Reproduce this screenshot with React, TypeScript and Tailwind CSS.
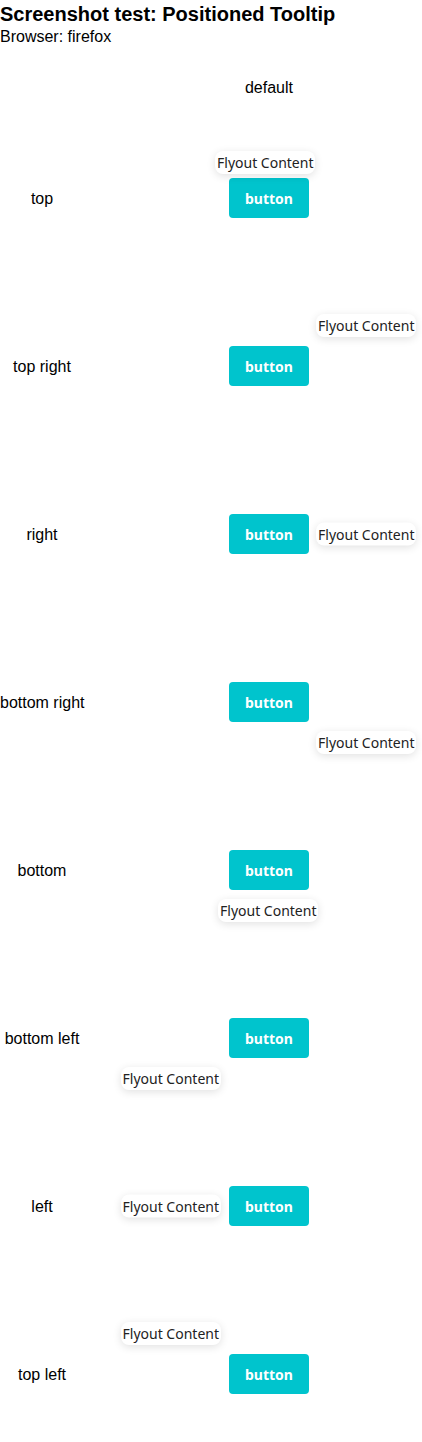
import React from 'react';

type Placement =
  | 'top'
  | 'top right'
  | 'right'
  | 'bottom right'
  | 'bottom'
  | 'bottom left'
  | 'left'
  | 'top left';

// tooltip offsets are measured off the reference, relative to the button
const placementClass: Record<Placement, string> = {
  top: 'bottom-[calc(100%+4px)] left-[-14px]',
  'top right': 'bottom-[calc(100%+9px)] left-[calc(100%+7px)]',
  right: 'top-1/2 -translate-y-1/2 left-[calc(100%+7px)]',
  'bottom right': 'top-[calc(100%+9px)] left-[calc(100%+7px)]',
  bottom: 'top-[calc(100%+9px)] left-[-11px]',
  'bottom left': 'top-[calc(100%+9px)] right-[calc(100%+8px)]',
  left: 'top-1/2 -translate-y-1/2 right-[calc(100%+8px)]',
  'top left': 'bottom-[calc(100%+9px)] right-[calc(100%+8px)]',
};

const rows: Placement[] = [
  'top',
  'top right',
  'right',
  'bottom right',
  'bottom',
  'bottom left',
  'left',
  'top left',
];

function Flyout({ placement }: { placement: Placement }) {
  return (
    <div className="relative">
      <button className="w-[80px] h-[40px] rounded-[4px] bg-[#00c4cd] text-white text-[14px] font-bold font-['Noto_Sans',sans-serif]">
        button
      </button>
      <div
        className={`absolute whitespace-nowrap rounded-[8px] bg-white px-[2px] h-[23px] leading-[23px] text-[14px] text-[#222] font-['Noto_Sans',sans-serif] shadow-[0_2px_8px_rgba(0,0,0,0.12)] ${placementClass[placement]}`}
      >
        Flyout Content
      </div>
    </div>
  );
}

export default function App() {
  return (
    <div className="w-[422px] font-['Liberation_Sans',Arial,sans-serif] text-black bg-white">
      <h1 className="text-[20px] font-bold leading-[24px] pt-[2px]">Screenshot test: Positioned Tooltip</h1>
      <p className="text-[16px] leading-[19px] mt-[1px]">Browser: firefox</p>

      <div className="grid grid-cols-[84px_1fr] gap-x-[32px] mt-[33px]">
        <div />
        <div className="w-[306px] text-center text-[16px] leading-[18px]">default</div>
      </div>

      <div className="mt-[17px]">
        {rows.map((p) => (
          <div key={p} className="grid grid-cols-[84px_1fr] gap-x-[32px] h-[168px] items-center">
            <div className="text-center whitespace-nowrap text-[16px] leading-[18px] pt-[2px]">{p}</div>
            <div className="w-[306px] flex justify-center">
              <Flyout placement={p} />
            </div>
          </div>
        ))}
      </div>
    </div>
  );
}
